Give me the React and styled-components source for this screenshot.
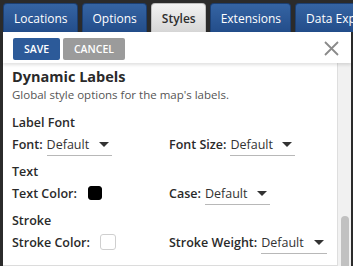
import styled, { createGlobalStyle } from 'styled-components';

const GlobalStyle = createGlobalStyle`
  html, body {
    margin: 0;
    padding: 0;
    background: #2b2b2b;
    overflow: hidden;
  }
  * {
    box-sizing: border-box;
  }
`;

const Frame = styled.div`
  width: 353px;
  height: 266px;
  display: flex;
  flex-direction: column;
  background: #2b2b2b;
  padding: 3px 0 0 3px;
  font-family: "Open Sans", "Liberation Sans", sans-serif;
  overflow: hidden;
`;

const TabBar = styled.div`
  display: flex;
  gap: 4px;
  height: 29px;
  flex-shrink: 0;
  white-space: nowrap;
  overflow: hidden;
`;

const Tab = styled.div`
  flex-shrink: 0;
  display: flex;
  align-items: center;
  padding: 0 9px 0 10px;
  border-radius: 4px 4px 0 0;
  font-size: 12px;
  font-weight: ${(p) => (p.$active ? 600 : 400)};
  color: ${(p) => (p.$active ? '#2e2e2e' : '#ffffff')};
  background: ${(p) =>
    p.$active
      ? 'linear-gradient(#f2f2f2, #d6d6d6)'
      : 'linear-gradient(#3564a3, #234d8a)'};
  border: 1px solid ${(p) => (p.$active ? '#bdbdbd' : '#1c3f72')};
  border-bottom: none;
`;

const Panel = styled.div`
  flex: 1;
  display: flex;
  flex-direction: column;
  background: #fff;
  border-right: 2px solid #2b2b2b;
  min-height: 0;
`;

const Header = styled.div`
  height: 31px;
  flex-shrink: 0;
  display: flex;
  align-items: flex-start;
  padding: 6px 12px 0 10px;
  gap: 3px;
  box-shadow: 0 2px 3px rgba(0, 0, 0, 0.12);
  position: relative;
  z-index: 1;
`;

const Button = styled.button`
  height: 22px;
  width: ${(p) => p.$w}px;
  border: none;
  border-radius: 2px;
  background: ${(p) => p.$bg};
  color: #fff;
  font-family: inherit;
  font-size: 10.5px;
  font-weight: 600;
  padding: 0;
`;

const Close = styled.div`
  margin-left: auto;
  margin-top: 3px;
  width: 15px;
  height: 15px;
  display: flex;
`;

const Body = styled.div`
  flex: 1;
  display: flex;
  min-height: 0;
`;

const Content = styled.div`
  flex: 1;
  padding: 4px 0 0 9px;
  color: #2a2a2a;
  border-bottom: 1px solid #dcdcdc;
`;

const Title = styled.div`
  font-size: 14.5px;
  font-weight: 700;
  line-height: 18px;
  margin-top: 1px;
`;

const Desc = styled.div`
  font-size: 11.5px;
  color: #555;
  line-height: 16px;
  margin-top: 1px;
`;

const Section = styled.div`
  margin-top: 11px;
  & + & {
    margin-top: 7px;
  }
`;

const SectionTitle = styled.div`
  font-size: 12.5px;
  font-weight: 600;
  line-height: 18px;
`;

const Row = styled.div`
  display: grid;
  grid-template-columns: 157px 1fr;
  height: 24px;
  align-items: center;
`;

const Field = styled.div`
  display: flex;
  align-items: baseline;
  line-height: 17px;
`;

const Label = styled.span`
  font-size: 12.5px;
  font-weight: 600;
  margin-right: ${(p) => p.$gap || 4}px;
`;

const Select = styled.div`
  display: flex;
  align-items: center;
  justify-content: space-between;
  width: ${(p) => p.$w || 65}px;
  font-size: 12.5px;
  color: #333;
  border-bottom: 1px solid #b8b8b8;
  padding: 0 3px 2px 0;
  margin-bottom: -3px;
`;

const Caret = styled.span`
  width: 0;
  height: 0;
  border-left: 5px solid transparent;
  border-right: 5px solid transparent;
  border-top: 5px solid #333;
`;

const Swatch = styled.span`
  align-self: center;
  width: ${(p) => p.$size}px;
  height: ${(p) => p.$size}px;
  border-radius: 3px;
  background: ${(p) => p.$color};
  border: 1px solid ${(p) => (p.$color === '#000' ? '#000' : '#cfcfcf')};
`;

const Scrollbar = styled.div`
  width: 14px;
  flex-shrink: 0;
  background: #f1f1f1;
  border-left: 1px solid #dedede;
  display: flex;
  flex-direction: column;
  align-items: center;
`;

const Thumb = styled.div`
  margin-top: auto;
  width: 8px;
  height: 50px;
  border-radius: 4px 4px 0 0;
  background: #c1c1c1;
`;

const DropDown = ({ w }) => (
  <Select $w={w}>
    Default
    <Caret />
  </Select>
);

const App = () => {
  const tabs = ['Locations', 'Options', 'Styles', 'Extensions', 'Data Export'];
  return (
    <>
      <GlobalStyle />
      <Frame>
        <TabBar>
          {tabs.map((t) => (
            <Tab key={t} $active={t === 'Styles'}>{t}</Tab>
          ))}
        </TabBar>
        <Panel>
          <Header>
            <Button $w={47} $bg="#2c5a99">SAVE</Button>
            <Button $w={62} $bg="#9b9b9b">CANCEL</Button>
            <Close>
              <svg width="15" height="15" viewBox="0 0 15 15">
                <path d="M1 1L14 14M14 1L1 14" stroke="#8a8a8a" strokeWidth="1.8" />
              </svg>
            </Close>
          </Header>
          <Body>
            <Content>
              <Title>Dynamic Labels</Title>
              <Desc>Global style options for the map's labels.</Desc>
              <Section>
                <SectionTitle>Label Font</SectionTitle>
                <Row>
                  <Field>
                    <Label>Font:</Label>
                    <DropDown w={65} />
                  </Field>
                  <Field>
                    <Label>Font Size:</Label>
                    <DropDown w={65} />
                  </Field>
                </Row>
              </Section>
              <Section>
                <SectionTitle>Text</SectionTitle>
                <Row>
                  <Field>
                    <Label $gap={11}>Text Color:</Label>
                    <Swatch $size={14} $color="#000" />
                  </Field>
                  <Field>
                    <Label>Case:</Label>
                    <DropDown w={65} />
                  </Field>
                </Row>
              </Section>
              <Section>
                <SectionTitle>Stroke</SectionTitle>
                <Row>
                  <Field>
                    <Label $gap={10}>Stroke Color:</Label>
                    <Swatch $size={16} $color="#fff" />
                  </Field>
                  <Field>
                    <Label>Stroke Weight:</Label>
                    <DropDown w={66} />
                  </Field>
                </Row>
              </Section>
            </Content>
            <Scrollbar>
              <Thumb />
            </Scrollbar>
          </Body>
        </Panel>
      </Frame>
    </>
  );
};

export default App;
